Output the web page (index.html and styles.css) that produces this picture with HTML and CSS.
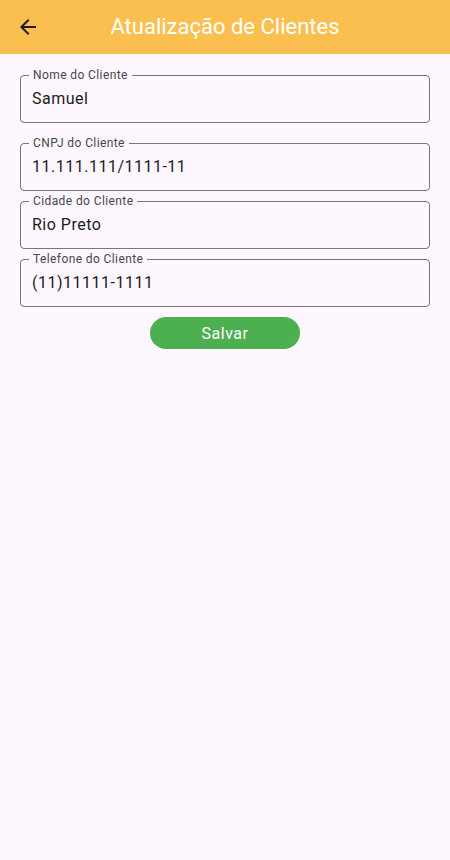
FILE: index.html
```html
<!DOCTYPE html>
<html lang="pt-BR">
<head>
<meta charset="utf-8">
<title>Atualização de Clientes</title>
<link rel="stylesheet" href="styles.css">
</head>
<body>
<header class="appbar">
  <button class="back" aria-label="Voltar">
    <svg viewBox="0 0 24 24" width="24" height="24"><path d="M20 11H7.83l5.59-5.59L12 4l-8 8 8 8 1.41-1.41L7.83 13H20v-2z" fill="#1D1B20"/></svg>
  </button>
  <h1 class="title">Atualização de Clientes</h1>
  <span></span>
</header>
<main class="form">
  <fieldset class="field field-first">
    <legend>Nome do Cliente</legend>
    <input type="text" value="Samuel">
  </fieldset>
  <fieldset class="field">
    <legend>CNPJ do Cliente</legend>
    <input type="text" value="11.111.111/1111-11">
  </fieldset>
  <fieldset class="field">
    <legend>Cidade do Cliente</legend>
    <input type="text" value="Rio Preto">
  </fieldset>
  <fieldset class="field">
    <legend>Telefone do Cliente</legend>
    <input type="text" value="(11)11111-1111">
  </fieldset>
  <div class="actions">
    <button class="save">Salvar</button>
  </div>
</main>
</body>
</html>
```
FILE: styles.css
```css
html, body {
  margin: 0;
  padding: 0;
}
body {
  background: #FEF7FF;
  font-family: Roboto, "Liberation Sans", sans-serif;
  color: #1D1B20;
  width: 450px;
  min-height: 860px;
}
.appbar {
  height: 54px;
  background: #FBBF4F;
  display: grid;
  grid-template-columns: 56px 1fr 56px;
  align-items: center;
}
.back {
  border: 0;
  background: none;
  padding: 0 0 0 16px;
  margin: 0;
  width: 56px;
  height: 54px;
  display: flex;
  align-items: center;
  cursor: pointer;
}
.back svg {
  display: block;
}
.title {
  margin: 0;
  text-align: center;
  font-size: 22px;
  font-weight: 400;
  color: #FFFFFF;
  line-height: 28px;
}
.form {
  padding: 13px 20px 0;
  display: flex;
  flex-direction: column;
}
.field {
  margin: 0 0 2px;
  padding: 0 12px 8px 8px;
  border: 1px solid #79747E;
  border-radius: 4px;
  min-width: 0;
}
.field-first {
  margin-bottom: 12px;
}
.field legend {
  padding: 0 4px;
  font-size: 12px;
  line-height: 16px;
  color: #49454F;
  letter-spacing: 0.4px;
}
.field input {
  display: block;
  box-sizing: border-box;
  width: 100%;
  height: 31px;
  margin: 0 0 0 3px;
  padding: 0;
  border: 0;
  outline: none;
  background: transparent;
  font-family: Roboto, "Liberation Sans", sans-serif;
  font-size: 16px;
  line-height: 31px;
  letter-spacing: 0.5px;
  color: #1D1B20;
}
.actions {
  display: flex;
  justify-content: center;
  margin-top: 8px;
}
.save {
  width: 150px;
  height: 32px;
  border: 0;
  border-radius: 16px;
  background: #4CAF50;
  color: #FFFFFF;
  font-family: Roboto, "Liberation Sans", sans-serif;
  font-size: 16px;
  font-weight: 400;
  letter-spacing: 0.5px;
  padding: 0;
  cursor: pointer;
}
```
